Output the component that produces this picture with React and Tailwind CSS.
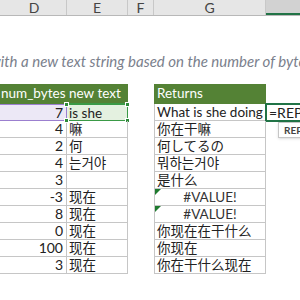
import React from "react";

const rows = [
  { d: "7", e: "is she", g: "What is she doing" },
  { d: "4", e: "嘛", g: "你在干嘛" },
  { d: "2", e: "何", g: "何してるの" },
  { d: "4", e: "는거야", g: "뭐하는거야" },
  { d: "3", e: "", g: "是什么" },
  { d: "-3", e: "现在", g: "#VALUE!", err: true },
  { d: "8", e: "现在", g: "#VALUE!", err: true },
  { d: "0", e: "现在", g: "你现在在干什么" },
  { d: "100", e: "现在", g: "你现在" },
  { d: "3", e: "现在", g: "你在干什么现在" },
];

const font = {
  fontFamily: '"Lato", "Noto Sans CJK SC", "Noto Sans CJK JP", "Noto Sans CJK KR", sans-serif',
};

function Handle({ cls }) {
  return <div className={"absolute w-[5px] h-[5px] bg-[#2e8b3a] border border-white " + cls} />;
}

export default function App() {
  return (
    <div className="w-[300px] h-[300px] overflow-hidden bg-white relative text-[#222]" style={font}>
      {/* column headers */}
      <div className="flex h-[16px] bg-[#e6e6e6] border-b border-[#b8b8b8] text-[14px] leading-[15px] text-[#444]">
        <div className="w-[67px] border-r border-[#c8c8c8] flex justify-center pl-[2px]">D</div>
        <div className="w-[61px] border-r border-[#c8c8c8] flex justify-center">E</div>
        <div className="w-[26px] border-r border-[#c8c8c8] flex justify-center">F</div>
        <div className="w-[112px] border-r border-[#c8c8c8] flex justify-center">G</div>
        <div className="flex-1 bg-[#d2d2d2] border-b-2 border-[#217346]"></div>
      </div>
      <div className="h-[37px]" />
      <div className="h-[17px] overflow-hidden">
        <div className="whitespace-nowrap italic text-[15px] leading-[17px] text-[#7a808c] -ml-[10px]">
          with a new text string based on the number of bytes you specify
        </div>
      </div>
      <div className="h-[14px]" />
      {/* table headers */}
      <div className="flex h-[20px] text-white text-[13.5px] leading-[19px]">
        <div className="w-[67px] bg-[#548235] pl-[1px] whitespace-nowrap overflow-hidden">num_bytes</div>
        <div className="w-[61px] bg-[#548235] pl-[2px] whitespace-nowrap overflow-hidden">new text</div>
        <div className="w-[26px]" />
        <div className="w-[112px] bg-[#548235] pl-[3px]">Returns</div>
        <div className="flex-1" />
      </div>
      {rows.map((r, i) => {
        const first = i === 0;
        return (
          <div key={i} className="flex h-[17px] text-[14px] leading-[16px]">
            <div
              className={
                "w-[67px] border-r border-b flex justify-end pr-[3px] " +
                (first ? "bg-[#ece8f6] border-[#9b7fcf] border-t" : "border-[#c6c6c6]")
              }
            >
              {r.d}
            </div>
            <div
              className={
                "w-[61px] border-b border-r pl-[2px] whitespace-nowrap relative text-[13.5px] " +
                (first ? "bg-[#e4f1e0] border-[#3a9a46] border-2 border-l-0 -mt-[1px] h-[18px]" : "border-[#c6c6c6]")
              }
            >
              {r.e}
              {first && (
                <>
                  <Handle cls="-left-[3px] -top-[3px]" />
                  <Handle cls="-right-[3px] -top-[3px]" />
                  <Handle cls="-left-[3px] -bottom-[3px]" />
                  <Handle cls="-right-[3px] -bottom-[3px]" />
                </>
              )}
            </div>
            <div className="w-[26px]" />
            <div
              className={
                "w-[112px] border-l border-r border-b border-[#c6c6c6] whitespace-nowrap relative text-[13.5px] " +
                (r.err ? "text-center text-[#333]" : "pl-[2px]")
              }
            >
              {r.err && (
                <div className="absolute left-0 top-0 w-0 h-0 border-t-[6px] border-t-[#1e7a2e] border-r-[6px] border-r-transparent" />
              )}
              {r.g}
            </div>
            <div className="flex-1 relative">
              {first && (
                <div className="absolute -left-[1px] -top-[1px] w-[40px] h-[19px] border-2 border-[#217346] pl-[2px] leading-[15px] bg-white whitespace-nowrap overflow-hidden">
                  =REP
                </div>
              )}
            </div>
          </div>
        );
      })}
      {/* tooltip */}
      <div className="absolute left-[278px] top-[122px] w-[40px] h-[16px] border border-[#c6c6c6] bg-white shadow-sm text-[10px] font-bold leading-[14px] pl-[5px] text-[#444] whitespace-nowrap overflow-hidden">
        REPLACEB
      </div>
    </div>
  );
}
